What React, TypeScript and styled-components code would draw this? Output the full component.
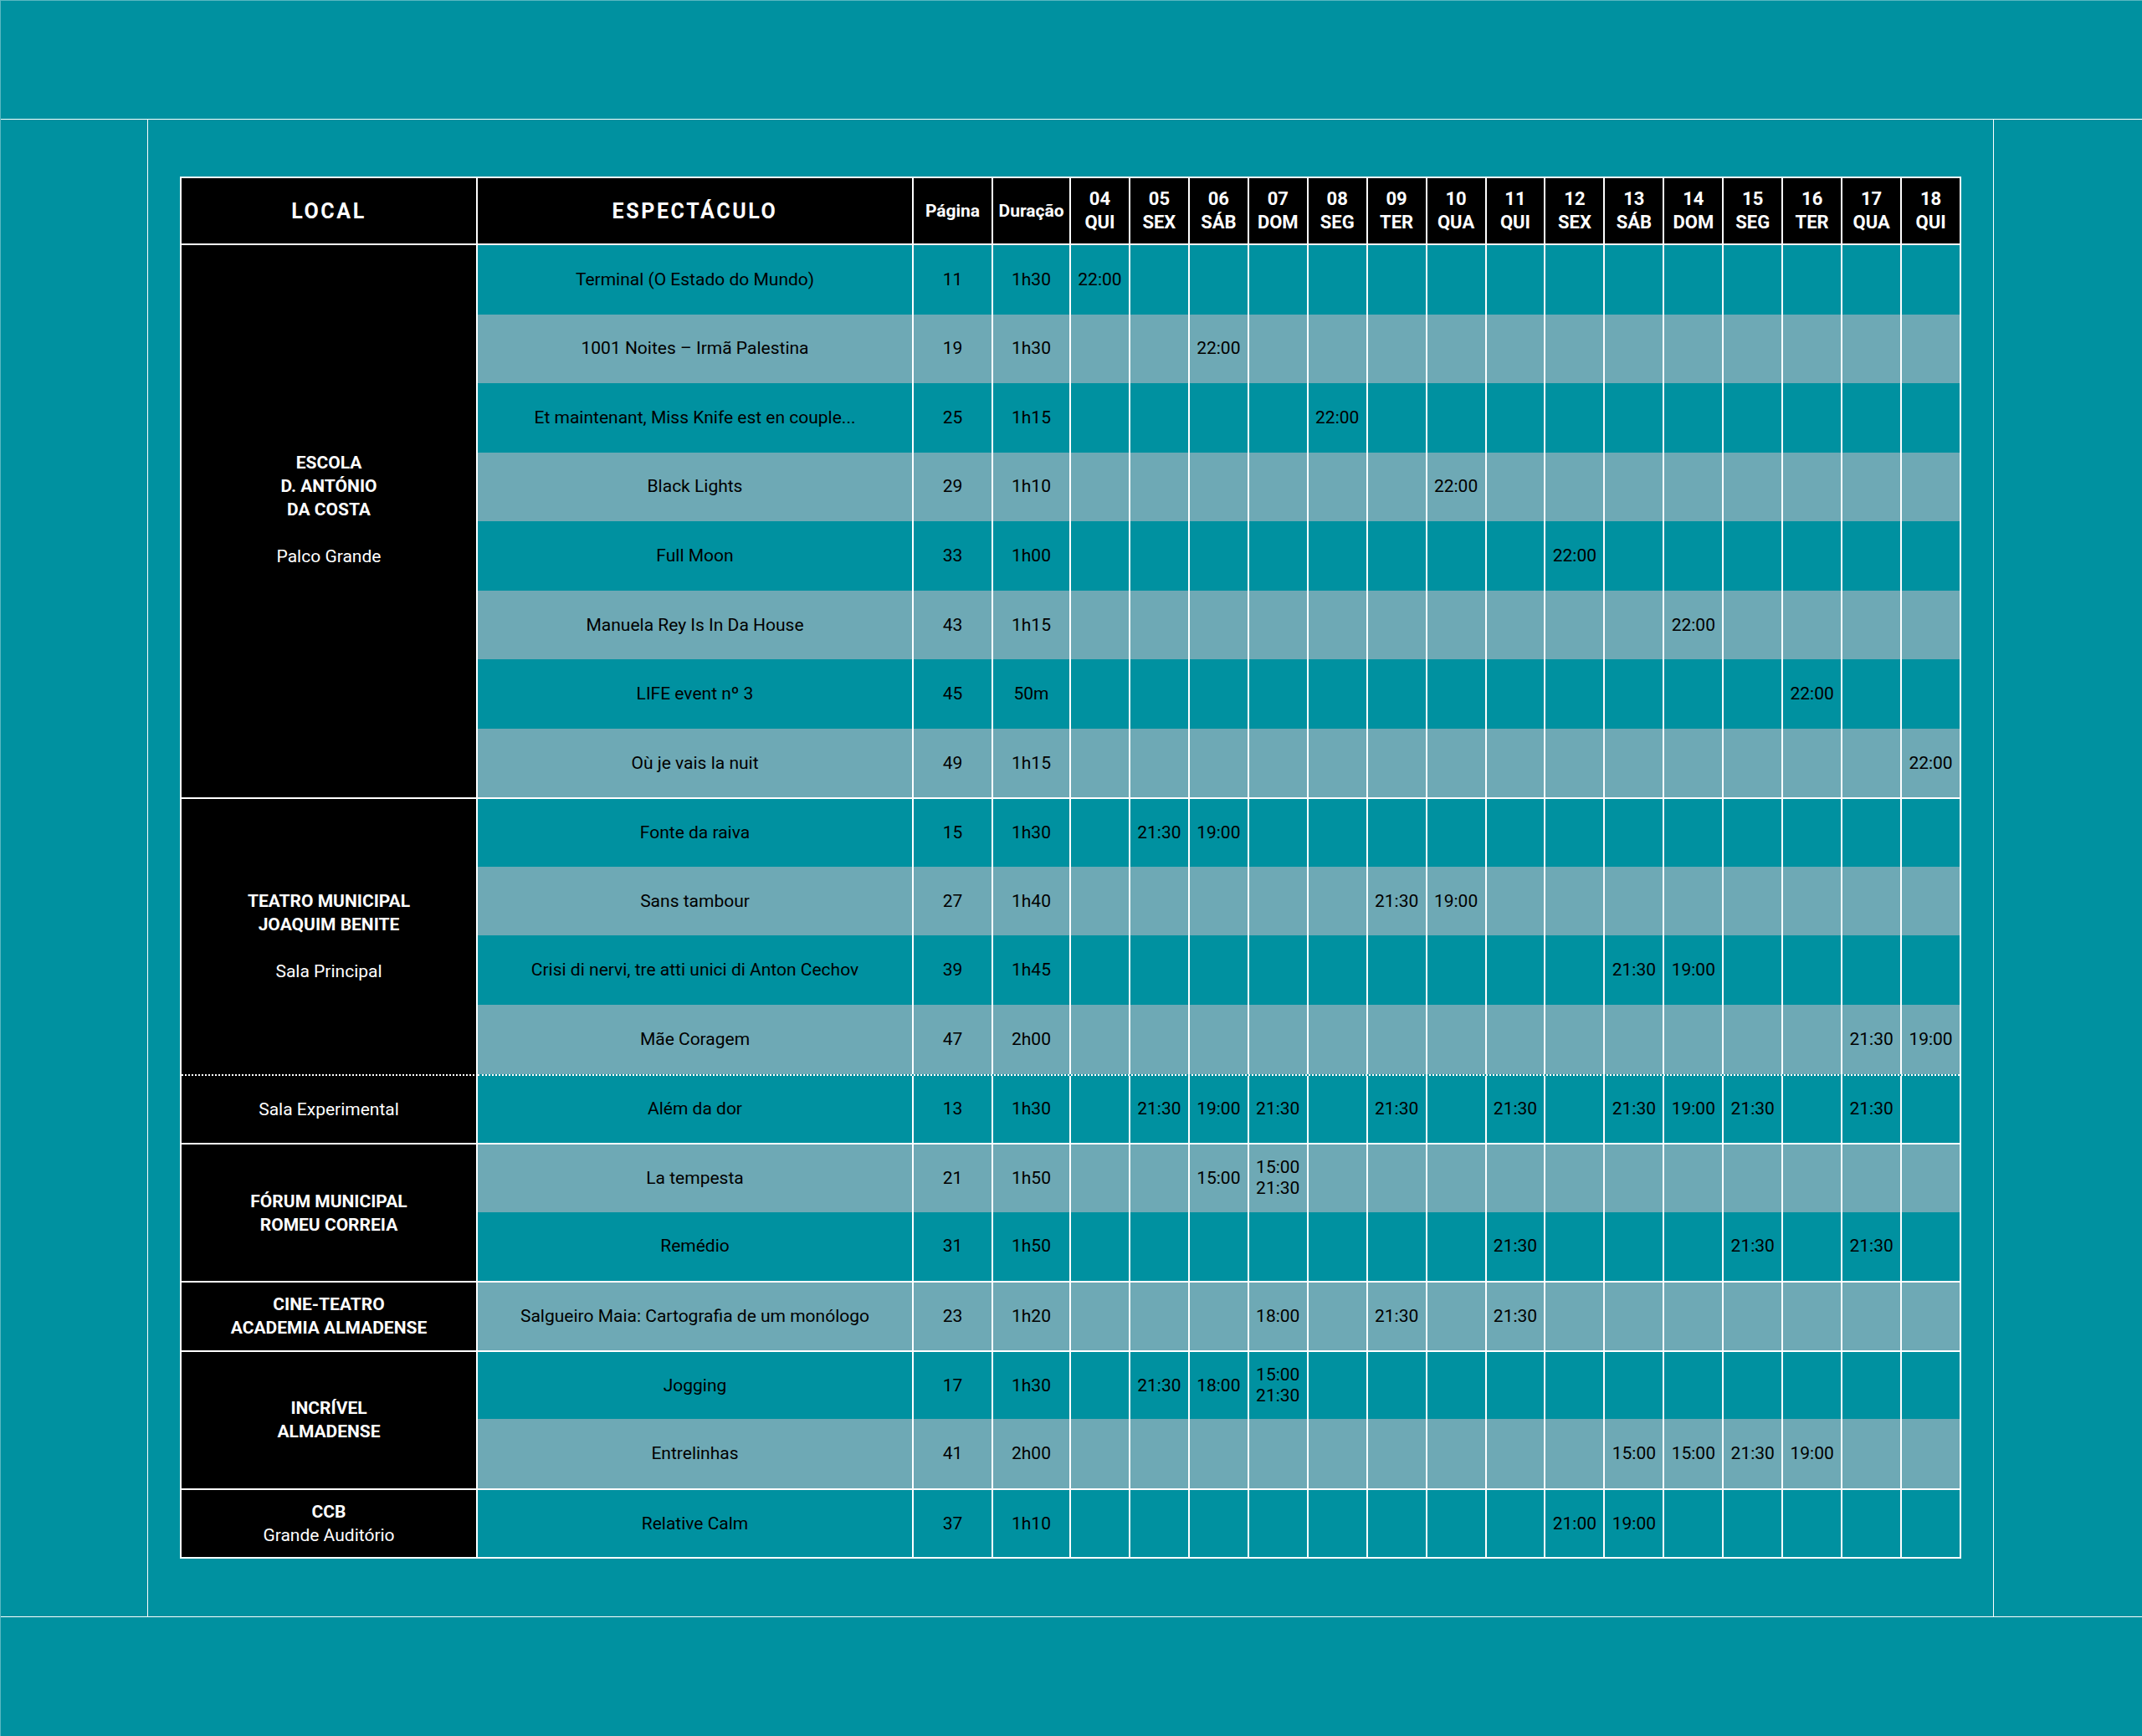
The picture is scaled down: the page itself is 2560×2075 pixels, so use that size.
import React from 'react';
import styled, { createGlobalStyle, css } from 'styled-components';

const TEAL = '#0091a0';
const LIGHT = '#6ea9b5';
const FONT = `Roboto, "DejaVu Sans", "Liberation Sans", sans-serif`;

const GlobalStyle = createGlobalStyle`
  html, body { margin: 0; padding: 0; background: ${TEAL}; }
  body { font-family: ${FONT}; }
  * { box-sizing: border-box; }
`;

const Page = styled.div`
  width: 2560px;
  height: 2075px;
  background: ${TEAL};
  display: flex;
  flex-direction: column;
  border-left: 1px solid rgba(255, 255, 255, 0.35);
  border-top: 1px solid rgba(255, 255, 255, 0.35);
`;

const TopBand = styled.div`
  height: 142px;
  flex: none;
  border-bottom: 1px solid #fff;
`;

const Middle = styled.div`
  height: 1789px;
  flex: none;
  display: flex;
`;

const SideBand = styled.div<{ $side: 'left' | 'right' }>`
  flex: none;
  width: ${(p) => (p.$side === 'left' ? '176px' : '178px')};
  ${(p) =>
    p.$side === 'left'
      ? css`border-right: 1px solid #fff;`
      : css`border-left: 1px solid #fff;`}
`;

const Content = styled.div`
  flex: 1;
  padding: 68px 38px 0 38px;
`;

const BottomBand = styled.div`
  flex: 1;
  border-top: 1px solid #fff;
`;

const Table = styled.div`
  width: 2129px;
  border: 2px solid #fff;
  display: flex;
  flex-direction: column;
`;

const HeaderRow = styled.div`
  display: grid;
  grid-template-columns: 352px 521px 95px 93px repeat(15, 1fr);
  height: 80px;
  background: #000;
  border-bottom: 2px solid #fff;
`;

type HeadKind = 'title' | 'small' | 'day';

const HeadCell = styled.div<{ $kind: HeadKind }>`
  display: flex;
  flex-direction: column;
  align-items: center;
  justify-content: center;
  text-align: center;
  color: #fff;
  font-weight: 700;
  border-left: 2px solid #fff;
  &:first-child {
    border-left: none;
  }
  ${(p) =>
    p.$kind === 'title'
      ? css`
          font-size: 25px;
          letter-spacing: 2.6px;
        `
      : p.$kind === 'small'
      ? css`
          font-size: 21px;
        `
      : css`
          font-size: 22px;
          line-height: 28px;
        `}
`;

const Group = styled.div`
  display: grid;
  grid-template-columns: 354px 1fr;
`;

type Sep = 'solid' | 'dotted' | undefined;

const VenueCell = styled.div<{ $sep?: Sep; $trail?: boolean }>`
  background: #000;
  color: #fff;
  border-right: 2px solid #fff;
  ${(p) => p.$sep && css`border-top: 2px ${p.$sep} #fff;`}
  display: flex;
  flex-direction: column;
  align-items: center;
  justify-content: center;
  text-align: center;
  font-size: 21px;
  line-height: 28px;
  padding-bottom: ${(p) => (p.$trail ? '28px' : '0')};
`;

const VenueName = styled.div`
  font-weight: 700;
`;

const VenueSub = styled.div<{ $gap?: boolean }>`
  font-weight: 400;
  margin-top: ${(p) => (p.$gap ? '28px' : '0')};
`;

const Shows = styled.div`
  display: flex;
  flex-direction: column;
`;

const ShowRow = styled.div<{ $light: boolean; $sep?: Sep }>`
  display: grid;
  grid-template-columns: 519px 95px 93px repeat(15, 1fr);
  height: 82.55px;
  background: ${(p) => (p.$light ? LIGHT : TEAL)};
  ${(p) => p.$sep && css`border-top: 2px ${p.$sep} #fff;`}
`;

const Cell = styled.div`
  display: flex;
  flex-direction: column;
  align-items: center;
  justify-content: center;
  text-align: center;
  color: #000;
  font-size: 21px;
  line-height: 25px;
  white-space: nowrap;
  border-left: 2px solid #fff;
  &:first-child {
    border-left: none;
  }
`;

const days: [string, string][] = [
  ['04', 'QUI'],
  ['05', 'SEX'],
  ['06', 'SÁB'],
  ['07', 'DOM'],
  ['08', 'SEG'],
  ['09', 'TER'],
  ['10', 'QUA'],
  ['11', 'QUI'],
  ['12', 'SEX'],
  ['13', 'SÁB'],
  ['14', 'DOM'],
  ['15', 'SEG'],
  ['16', 'TER'],
  ['17', 'QUA'],
  ['18', 'QUI'],
];

type Show = {
  title: string;
  page: string;
  dur: string;
  times: Record<string, string[]>;
};

type VenueGroup = {
  lines: string[];
  sub?: string;
  subGap?: boolean;
  trail?: boolean;
  sep?: Sep;
  shows: Show[];
};

const groups: VenueGroup[] = [
  {
    lines: ['ESCOLA', 'D. ANTÓNIO', 'DA COSTA'],
    sub: 'Palco Grande',
    subGap: true,
    trail: true,
    shows: [
      { title: 'Terminal (O Estado do Mundo)', page: '11', dur: '1h30', times: { '04': ['22:00'] } },
      { title: '1001 Noites – Irmã Palestina', page: '19', dur: '1h30', times: { '06': ['22:00'] } },
      { title: 'Et maintenant, Miss Knife est en couple...', page: '25', dur: '1h15', times: { '08': ['22:00'] } },
      { title: 'Black Lights', page: '29', dur: '1h10', times: { '10': ['22:00'] } },
      { title: 'Full Moon', page: '33', dur: '1h00', times: { '12': ['22:00'] } },
      { title: 'Manuela Rey Is In Da House', page: '43', dur: '1h15', times: { '14': ['22:00'] } },
      { title: 'LIFE event nº 3', page: '45', dur: '50m', times: { '16': ['22:00'] } },
      { title: 'Où je vais la nuit', page: '49', dur: '1h15', times: { '18': ['22:00'] } },
    ],
  },
  {
    lines: ['TEATRO MUNICIPAL', 'JOAQUIM BENITE'],
    sub: 'Sala Principal',
    subGap: true,
    sep: 'solid',
    shows: [
      { title: 'Fonte da raiva', page: '15', dur: '1h30', times: { '05': ['21:30'], '06': ['19:00'] } },
      { title: 'Sans tambour', page: '27', dur: '1h40', times: { '09': ['21:30'], '10': ['19:00'] } },
      {
        title: 'Crisi di nervi, tre atti unici di Anton Cechov',
        page: '39',
        dur: '1h45',
        times: { '13': ['21:30'], '14': ['19:00'] },
      },
      { title: 'Mãe Coragem', page: '47', dur: '2h00', times: { '17': ['21:30'], '18': ['19:00'] } },
    ],
  },
  {
    lines: [],
    sub: 'Sala Experimental',
    sep: 'dotted',
    shows: [
      {
        title: 'Além da dor',
        page: '13',
        dur: '1h30',
        times: {
          '05': ['21:30'],
          '06': ['19:00'],
          '07': ['21:30'],
          '09': ['21:30'],
          '11': ['21:30'],
          '13': ['21:30'],
          '14': ['19:00'],
          '15': ['21:30'],
          '17': ['21:30'],
        },
      },
    ],
  },
  {
    lines: ['FÓRUM MUNICIPAL', 'ROMEU CORREIA'],
    sep: 'solid',
    shows: [
      { title: 'La tempesta', page: '21', dur: '1h50', times: { '06': ['15:00'], '07': ['15:00', '21:30'] } },
      { title: 'Remédio', page: '31', dur: '1h50', times: { '11': ['21:30'], '15': ['21:30'], '17': ['21:30'] } },
    ],
  },
  {
    lines: ['CINE-TEATRO', 'ACADEMIA ALMADENSE'],
    sep: 'solid',
    shows: [
      {
        title: 'Salgueiro Maia: Cartografia de um monólogo',
        page: '23',
        dur: '1h20',
        times: { '07': ['18:00'], '09': ['21:30'], '11': ['21:30'] },
      },
    ],
  },
  {
    lines: ['INCRÍVEL', 'ALMADENSE'],
    sep: 'solid',
    shows: [
      {
        title: 'Jogging',
        page: '17',
        dur: '1h30',
        times: { '05': ['21:30'], '06': ['18:00'], '07': ['15:00', '21:30'] },
      },
      {
        title: 'Entrelinhas',
        page: '41',
        dur: '2h00',
        times: { '13': ['15:00'], '14': ['15:00'], '15': ['21:30'], '16': ['19:00'] },
      },
    ],
  },
  {
    lines: ['CCB'],
    sub: 'Grande Auditório',
    sep: 'solid',
    shows: [{ title: 'Relative Calm', page: '37', dur: '1h10', times: { '12': ['21:00'], '13': ['19:00'] } }],
  },
];

export default function App() {
  let rowIndex = 0;
  return (
    <>
      <GlobalStyle />
      <Page>
        <TopBand />
        <Middle>
          <SideBand $side="left" />
          <Content>
            <Table>
              <HeaderRow>
                <HeadCell $kind="title">LOCAL</HeadCell>
                <HeadCell $kind="title">ESPECTÁCULO</HeadCell>
                <HeadCell $kind="small">Página</HeadCell>
                <HeadCell $kind="small">Duração</HeadCell>
                {days.map(([n, d]) => (
                  <HeadCell $kind="day" key={n}>
                    <span>{n}</span>
                    <span>{d}</span>
                  </HeadCell>
                ))}
              </HeaderRow>
              {groups.map((g, gi) => (
                <Group key={gi}>
                  <VenueCell $sep={g.sep} $trail={g.trail}>
                    {g.lines.map((l) => (
                      <VenueName key={l}>{l}</VenueName>
                    ))}
                    {g.sub && <VenueSub $gap={g.subGap}>{g.sub}</VenueSub>}
                  </VenueCell>
                  <Shows>
                    {g.shows.map((s, si) => {
                      const light = rowIndex % 2 === 1;
                      rowIndex += 1;
                      return (
                        <ShowRow key={s.title} $light={light} $sep={si === 0 ? g.sep : undefined}>
                          <Cell>{s.title}</Cell>
                          <Cell>{s.page}</Cell>
                          <Cell>{s.dur}</Cell>
                          {days.map(([n]) => (
                            <Cell key={n}>
                              {(s.times[n] || []).map((t) => (
                                <span key={t}>{t}</span>
                              ))}
                            </Cell>
                          ))}
                        </ShowRow>
                      );
                    })}
                  </Shows>
                </Group>
              ))}
            </Table>
          </Content>
          <SideBand $side="right" />
        </Middle>
        <BottomBand />
      </Page>
    </>
  );
}
